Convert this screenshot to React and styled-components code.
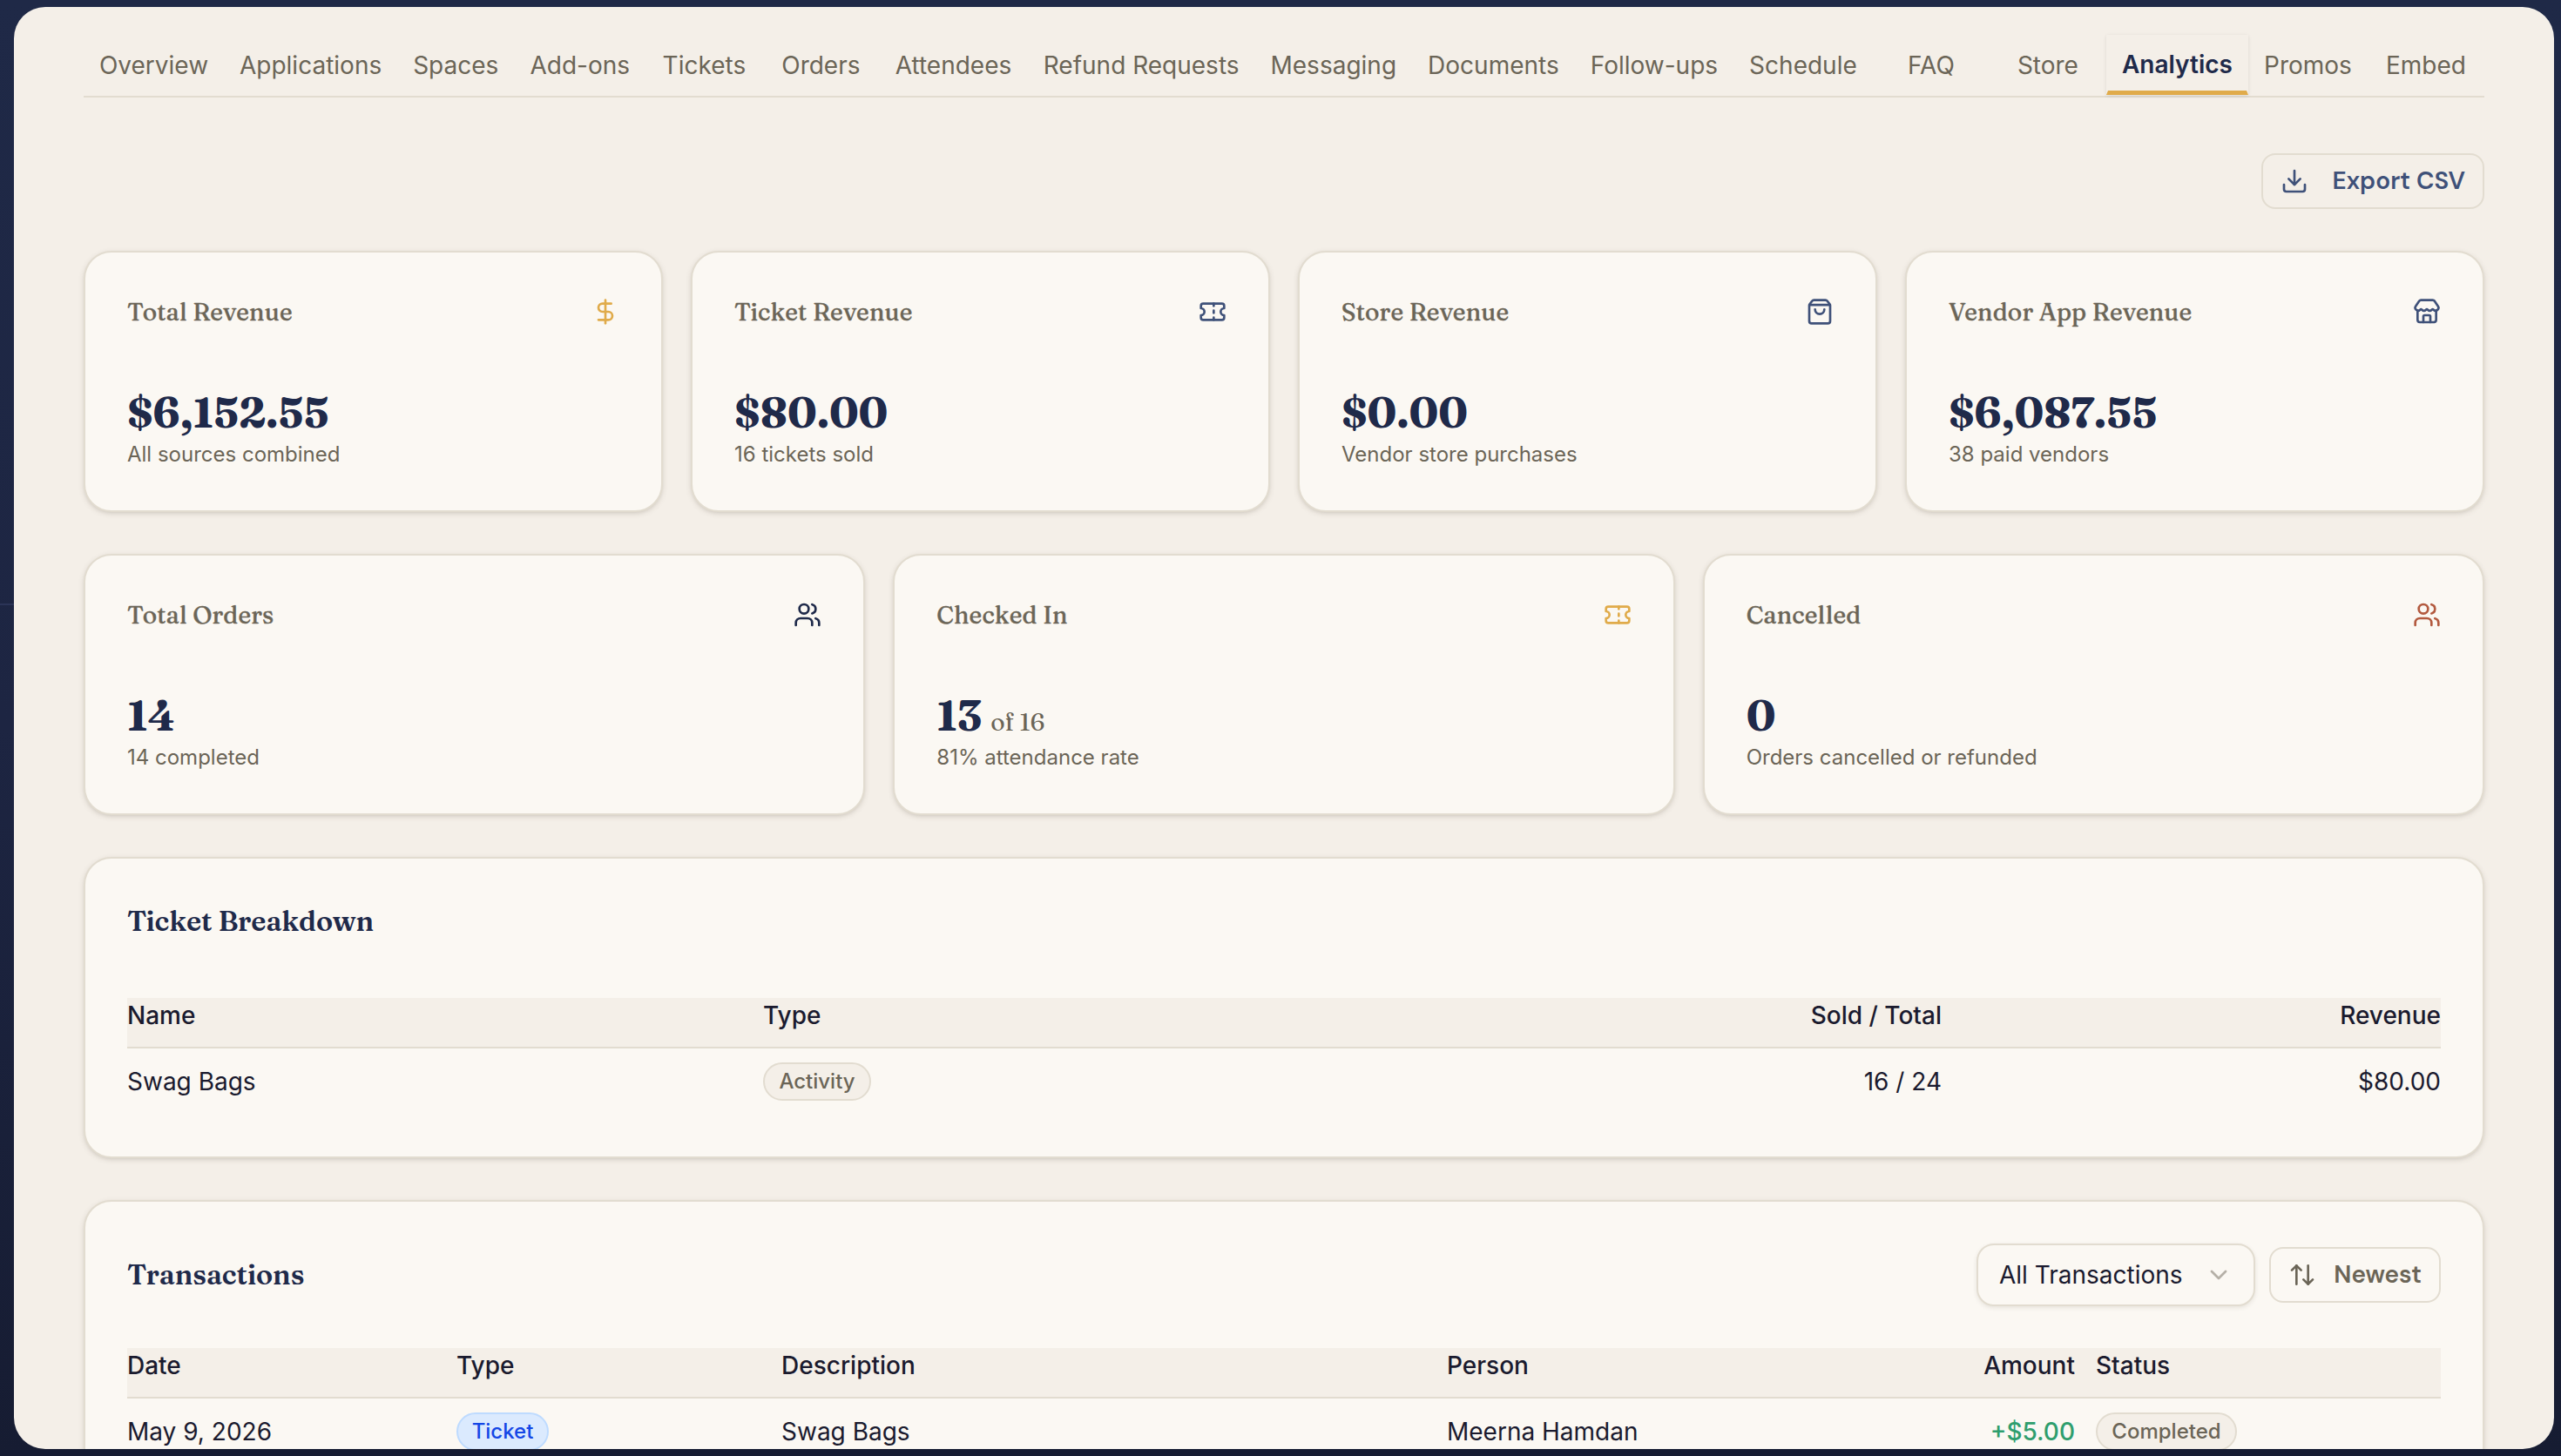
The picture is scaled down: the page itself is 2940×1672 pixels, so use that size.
import React from "react";
import styled, { createGlobalStyle } from "styled-components";
import { Download, DollarSign, Ticket, ShoppingBag, Store, Users, ChevronDown, ArrowUpDown } from "lucide-react";

const sans = `Inter, "Liberation Sans", sans-serif`;
const action = `"DM Sans", Inter, "Liberation Sans", sans-serif`;
const serif = `Fraunces, "Liberation Serif", serif`;
const c = { navy: "#1f2a4a", ink: "#1a1a2e", muted: "#6b6557", line: "#e2dcd0", cream: "#f4efe8", card: "#fbf8f3", gold: "#e0ab4a", blue: "#3f5179", rust: "#b35a3f" };

const Global = createGlobalStyle`
  *{box-sizing:border-box}
  body{margin:0;background:#1f2947;font-family:${sans};}
`;
const Shell = styled.div`
  height:1672px;width:2940px;overflow:hidden;display:grid;grid-template-columns:16px 2916px 8px;padding-top:8px;
  background:linear-gradient(180deg,#1f2947 0%,#1d2542 50%,#161c32 100%);
`;
const Rail = styled.aside`
  padding-top:685px;
  &::after{content:"";display:block;height:2px;background:#2b3457;}
`;
const Page = styled.main`
  height:1656px;width:2916px;border-radius:36px;background:${c.cream};overflow:hidden;
  padding:32px 80px 0;display:flex;flex-direction:column;
`;
const Tabs = styled.nav`display:flex;height:72px;border-bottom:2px solid ${c.line};flex:none;`;
const Tab = styled.button`
  appearance:none;border:0;background:none;padding:0;margin:0;flex:none;
  width:${p => p.$w}px;height:70px;text-align:center;white-space:nowrap;
  font:400 28px/70px ${sans};color:${c.muted};
`;
const ActiveTab = styled(Tab)`
  height:69px;font-weight:600;line-height:68px;color:${c.navy};
  border:2px solid transparent;border-top:0;border-bottom:5px solid ${c.gold};
  box-shadow:0 1px 4px rgba(0,0,0,.1);
`;
const Actions = styled.div`display:flex;justify-content:flex-end;margin:64px 0 48px;flex:none;`;
const Button = styled.button`
  display:flex;align-items:center;height:64px;width:${p => p.$w}px;padding:0 20px;margin:0;
  justify-content:space-between;border:2px solid ${c.line};border-radius:16px;background:transparent;
  color:${p => p.$c};font:600 28px/36px ${action};white-space:nowrap;
`;
const Grid = styled.section`
  display:grid;grid-template-columns:repeat(${p => p.$n},1fr);gap:32px;margin-bottom:48px;flex:none;
`;
const Card = styled.article`
  background:${c.card};border:2px solid ${c.line};border-radius:32px;
  box-shadow:0 2px 6px rgba(60,50,30,.13),0 2px 4px -2px rgba(60,50,30,.12);
  height:${p => p.$h}px;padding:0 48px;flex:none;margin-bottom:${p => p.$mb || 0}px;
`;
const StatHead = styled.header`display:flex;justify-content:space-between;align-items:center;height:44px;margin-top:46px;`;
const StatTitle = styled.h3`margin:0;font:500 28px/44px ${serif};color:${c.muted};letter-spacing:.14px;-webkit-text-stroke:.4px ${c.muted};`;
const Value = styled.div`margin-top:62px;height:64px;font:700 48px/64px ${serif};color:${c.navy};white-space:nowrap;letter-spacing:-.1px;`;
const Of = styled.span`font:400 28px/1 ${serif};color:${c.muted};margin-left:10px;letter-spacing:0;`;
const Note = styled.p`margin:0;font:400 24px/32px ${sans};color:${c.muted};`;
const PanelHead = styled.header`display:flex;align-items:center;justify-content:space-between;height:${p => p.$h}px;margin-top:48px;`;
const PanelTitle = styled.h2`margin:0;font:600 32px/44px ${serif};color:${c.navy};letter-spacing:-.1px;`;
const Controls = styled.div`display:flex;align-items:center;gap:16px;`;
const Select = styled.div`
  display:flex;align-items:center;justify-content:space-between;width:320px;height:72px;padding:0 24px;
  border:2px solid ${c.line};border-radius:20px;background:${c.card};box-shadow:0 2px 5px rgba(60,50,30,.1);
  font:400 28px/40px ${sans};color:${c.ink};
  svg{color:#b5b0a7}
`;
const Row = styled.div`
  display:grid;grid-template-columns:${p => p.$cols};color:${c.ink};
  font:${p => (p.$head ? 500 : 400)} 28px/40px ${sans};
  height:${p => (p.$head ? 58 : 76)}px;align-items:${p => (p.$head ? "start" : "center")};
  background:${p => (p.$head ? c.cream : "transparent")};
  border-bottom:${p => (p.$head ? `2px solid ${c.line}` : "0")};
  margin-top:${p => p.$mt || 0}px;
`;
const Cell = styled.div`text-align:${p => (p.$r ? "right" : "left")};white-space:nowrap;display:${p => (p.$b ? "flex" : "block")};padding-left:${p => p.$pl || 0}px;`;
const Amount = styled(Cell)`color:#2f9e6e;font-weight:500;`;
const Badge = styled.span`
  display:inline-flex;align-items:center;justify-content:center;height:44px;width:${p => p.$w}px;border-radius:22px;
  font:500 24px/32px ${sans};
  border:2px solid ${p => (p.$blue ? "#bedbff" : c.line)};
  background:${p => (p.$blue ? "#dbeafe" : c.cream)};color:${p => (p.$blue ? "#1447e6" : c.muted)};
`;

const tabs = [["Overview", 161], ["Applications", 199.2], ["Spaces", 134.1], ["Add-ons", 151.1], ["Tickets", 134], ["Orders", 134], ["Attendees", 170.2], ["Refund Requests", 261.2], ["Messaging", 180.1], ["Documents", 187.1], ["Follow-ups", 182], ["Schedule", 160], ["FAQ", 134], ["Store", 134], ["Analytics", 163], ["Promos", 137], ["Embed", 134]];
const revenue = [
  ["Total Revenue", "$6,152.55", "All sources combined", DollarSign, c.gold],
  ["Ticket Revenue", "$80.00", "16 tickets sold", Ticket, c.blue],
  ["Store Revenue", "$0.00", "Vendor store purchases", ShoppingBag, c.blue],
  ["Vendor App Revenue", "$6,087.55", "38 paid vendors", Store, c.blue],
];
const orders = [
  ["Total Orders", "14", "14 completed", Users, c.navy],
  ["Checked In", "13", "81% attendance rate", Ticket, c.gold, "of 16"],
  ["Cancelled", "0", "Orders cancelled or refunded", Users, c.rust],
];

function Stat({ d }) {
  const [title, value, note, Icon, color, extra] = d;
  return (
    <Card $h={300}>
      <StatHead><StatTitle>{title}</StatTitle><Icon size={32} strokeWidth={2} color={color} /></StatHead>
      <Value>{value}{extra && <Of>{extra}</Of>}</Value>
      <Note>{note}</Note>
    </Card>
  );
}

export default function App() {
  const a = "730px 678px 675px 1fr";
  const b = "378px 373px 764px 560px 161px 1fr";
  return (
    <>
      <Global />
      <Shell>
        <Rail />
        <Page>
          <Tabs>{tabs.map(([t, w]) => { const T = t === "Analytics" ? ActiveTab : Tab; return <T key={t} $w={w}>{t}</T>; })}</Tabs>
          <Actions><Button $w={256} $c={c.blue}><Download size={32} strokeWidth={2} />Export CSV</Button></Actions>
          <Grid $n={4}>{revenue.map(d => <Stat key={d[0]} d={d} />)}</Grid>
          <Grid $n={3}>{orders.map(d => <Stat key={d[0]} d={d} />)}</Grid>
          <Card $h={346} $mb={48}>
            <PanelHead $h={48}><PanelTitle>Ticket Breakdown</PanelTitle></PanelHead>
            <Row $head $cols={a} $mt={64}><Cell>Name</Cell><Cell>Type</Cell><Cell $r>Sold / Total</Cell><Cell $r>Revenue</Cell></Row>
            <Row $cols={a}><Cell>Swag Bags</Cell><Cell $b><Badge $w={124}>Activity</Badge></Cell><Cell $r>16 / 24</Cell><Cell $r>$80.00</Cell></Row>
          </Card>
          <Card $h={500}>
            <PanelHead $h={72}>
              <PanelTitle>Transactions</PanelTitle>
              <Controls>
                <Select>All Transactions<ChevronDown size={32} strokeWidth={2} /></Select>
                <Button $w={197} $c={c.muted}><ArrowUpDown size={32} strokeWidth={2} />Newest</Button>
              </Controls>
            </PanelHead>
            <Row $head $cols={b} $mt={48}><Cell>Date</Cell><Cell>Type</Cell><Cell>Description</Cell><Cell>Person</Cell><Cell $r>Amount</Cell><Cell $pl={24}>Status</Cell></Row>
            <Row $cols={b}><Cell>May 9, 2026</Cell><Cell $b><Badge $blue $w={106}>Ticket</Badge></Cell><Cell>Swag Bags</Cell><Cell>Meerna Hamdan</Cell><Amount $r>+$5.00</Amount><Cell $b $pl={24}><Badge $w={162}>Completed</Badge></Cell></Row>
          </Card>
        </Page>
      </Shell>
    </>
  );
}
